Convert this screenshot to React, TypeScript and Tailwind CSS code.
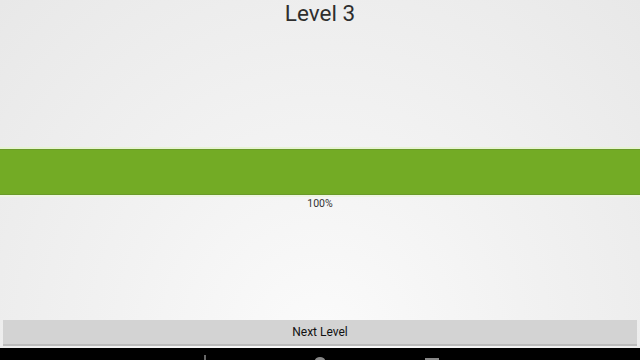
import React from "react";

export default function App() {
  return (
    <div
      className="w-[640px] h-[360px] flex flex-col overflow-hidden"
      style={{ fontFamily: "Roboto, 'Liberation Sans', sans-serif" }}
    >
      <div className="flex-1 flex flex-col bg-[radial-gradient(ellipse_at_50%_100%,#fbfbfb_0%,#f2f2f2_45%,#e8e8e8_100%)]">
        <div className="h-[26px] flex items-center justify-center text-[22.5px] leading-none text-[#2e2e2e] pt-[1px]">
          Level 3
        </div>
        <div className="h-[121px]" />
        <div className="h-[2px] bg-[#e6f3d2]" />
        <div className="h-[46px] bg-[#73ab25] border-t border-b border-[#6a9a2a]" />
        <div className="h-[2px] bg-[#eef5e2]" />
        <div className="h-[14px] flex items-center justify-center text-[10.5px] text-[#333333]">
          100%
        </div>
        <div className="flex-1" />
        <div className="px-[3px] pb-[2px]">
          <div className="h-[26px] flex items-center justify-center bg-[#d3d3d3] border-b-2 border-[#bcbcbc] text-[12px] text-[#111111]">
            Next Level
          </div>
        </div>
      </div>
      <div className="h-[12px] bg-black relative">
        <svg className="absolute left-[198px] top-[6px]" width="14" height="6" viewBox="0 0 14 6">
          <path d="M7 1 L7 6" stroke="#666" strokeWidth="2" />
        </svg>
        <svg className="absolute left-[312px] top-[7px]" width="16" height="5" viewBox="0 0 16 5">
          <ellipse cx="8" cy="5" rx="5" ry="3" fill="#888" />
        </svg>
        <svg className="absolute left-[424px] top-[9px]" width="16" height="3" viewBox="0 0 16 3">
          <rect x="1" y="1" width="14" height="2" fill="#888" />
        </svg>
      </div>
    </div>
  );
}
